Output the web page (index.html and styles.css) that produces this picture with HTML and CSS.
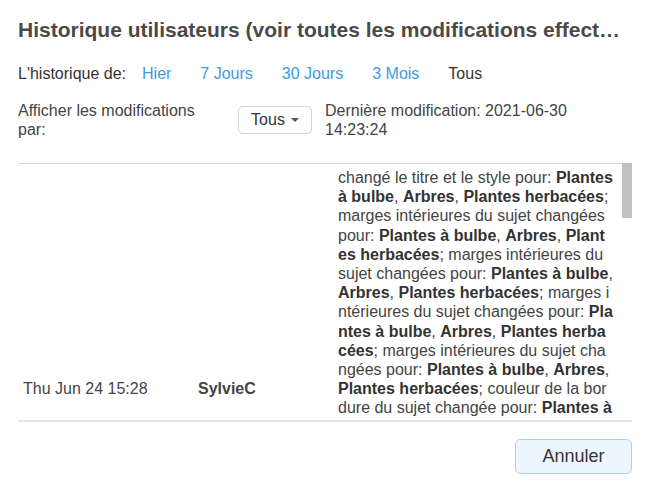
FILE: index.html
```html
<!DOCTYPE html>
<html lang="fr">
<head>
<meta charset="utf-8">
<link rel="stylesheet" href="styles.css">
</head>
<body>
<div class="dialog">
  <h1 class="title">Historique utilisateurs (voir toutes les modifications effectuées par les utilisateurs)</h1>
  <div class="range">
    <span class="range-label">L'historique de:</span>
    <a class="link">Hier</a>
    <a class="link">7 Jours</a>
    <a class="link">30 Jours</a>
    <a class="link">3 Mois</a>
    <span class="current">Tous</span>
  </div>
  <div class="filter">
    <div class="filter-label">Afficher les modifications par:</div>
    <button class="select">Tous <span class="caret"></span></button>
    <div class="last">Dernière modification: 2021-06-30 14:23:24</div>
  </div>
  <div class="scroll">
    <div class="viewport">
      <table class="log">
        <tr>
          <td class="c-date">Thu Jun 24 15:28</td>
          <td class="c-user">SylvieC</td>
          <td class="c-text">changé le titre et le style pour: <b>Plantes à bulbe</b>, <b>Arbres</b>, <b>Plantes herbacées</b>; marges intérieures du sujet changées pour: <b>Plantes à bulbe</b>, <b>Arbres</b>, <b>Plantes herbacées</b>; marges intérieures du sujet changées pour: <b>Plantes à bulbe</b>, <b>Arbres</b>, <b>Plantes herbacées</b>; marges intérieures du sujet changées pour: <b>Plantes à bulbe</b>, <b>Arbres</b>, <b>Plantes herbacées</b>; marges intérieures du sujet changées pour: <b>Plantes à bulbe</b>, <b>Arbres</b>, <b>Plantes herbacées</b>; couleur de la bordure du sujet changée pour: <b>Plantes à bulbe</b>, <b>Arbres</b>, <b>Plantes herbacées</b>; couleur de fond du sujet changée pour: <b>Plantes à bulbe</b>, <b>Arbres</b>, <b>Plantes herbacées</b>; forme du sujet changée pour: <b>Plantes à bulbe</b>, <b>Arbres</b>, <b>Plantes herbacées</b>; police du sujet changée pour: <b>Plantes à bulbe</b>, <b>Arbres</b>, <b>Plantes herbacées</b>; taille de police changée pour: <b>Plantes à bulbe</b>, <b>Arbres</b>, <b>Plantes herbacées</b></td>
        </tr>
        <tr>
          <td class="c-date">Thu Jun 24 15:27</td>
          <td class="c-user">SylvieC</td>
          <td class="c-text">ajouté les sujets: <b>Plantes à bulbe</b>, <b>Arbres</b>, <b>Plantes herbacées</b>; couleur de la ligne changée pour: <b>Plantes à bulbe</b>, <b>Arbres</b>, <b>Plantes herbacées</b>; couleur du texte changée pour: <b>Arbres</b></td>
        </tr>
      </table>
    </div>
    <div class="scrollbar"><div class="thumb"></div></div>
  </div>
  <div class="footer">
    <button class="cancel">Annuler</button>
  </div>
</div>
</body>
</html>
```

FILE: styles.css
```css
html, body {
  margin: 0;
  padding: 0;
  background: #ffffff;
}
body {
  font-family: "Liberation Sans", Arial, sans-serif;
  color: #444444;
  font-size: 16px;
}
.dialog {
  padding: 17px 18px 0 18px;
  display: flex;
  flex-direction: column;
}
.title {
  margin: 0;
  font-size: 21px;
  line-height: 26px;
  font-weight: bold;
  color: #4a4a4a;
  white-space: nowrap;
  overflow: hidden;
  text-overflow: ellipsis;
  padding-right: 8px;
}
.range {
  margin-top: 21px;
  display: flex;
  align-items: center;
  line-height: 20px;
  color: #333333;
}
.range-label {
  margin-right: 16px;
}
.link {
  color: #3d9be0;
  margin-right: 29px;
  cursor: pointer;
}
.current {
  color: #333333;
}
.filter {
  margin-top: 17px;
  display: flex;
  align-items: center;
  line-height: 19px;
  color: #444444;
}
.filter-label {
  width: 195px;
  margin-right: 25px;
}
.select {
  font-family: inherit;
  font-size: 16px;
  color: #333333;
  background: #ffffff;
  border: 1px solid #d4d4d4;
  border-radius: 5px;
  height: 28px;
  width: 74px;
  padding: 0;
  display: flex;
  align-items: center;
  justify-content: center;
  gap: 6px;
  margin-right: 13px;
}
.caret {
  width: 0;
  height: 0;
  border-left: 4px solid transparent;
  border-right: 4px solid transparent;
  border-top: 4px solid #555555;
}
.last {
  width: 260px;
}
.scroll {
  margin-top: 24px;
  height: 257px;
  display: flex;
  border-bottom: 2px solid #e6e6e6;
}
.viewport {
  flex: 1;
  overflow: hidden;
}
.scrollbar {
  width: 10px;
  background: #ffffff;
}
.thumb {
  height: 55px;
  background: #c1c1c1;
}
.log {
  width: 100%;
  border-collapse: collapse;
  border-top: 1px solid #d6d6d6;
}
.log td {
  vertical-align: middle;
  padding: 4px 5px;
  line-height: 19.2px;
}
.c-date {
  width: 165px;
  color: #444444;
}
.c-user {
  width: 130px;
  font-weight: bold;
  color: #444444;
}
.log td.c-text {
  word-break: break-all;
  color: #444444;
  padding-right: 9px;
}
.c-text b {
  color: #333333;
}
.footer {
  display: flex;
  justify-content: flex-end;
  margin-top: 17px;
}
.cancel {
  font-family: inherit;
  font-size: 18px;
  color: #333333;
  background: #eef6fd;
  border: 1px solid #a9d3f0;
  border-radius: 5px;
  width: 117px;
  height: 35px;
  padding: 0;
}
```
